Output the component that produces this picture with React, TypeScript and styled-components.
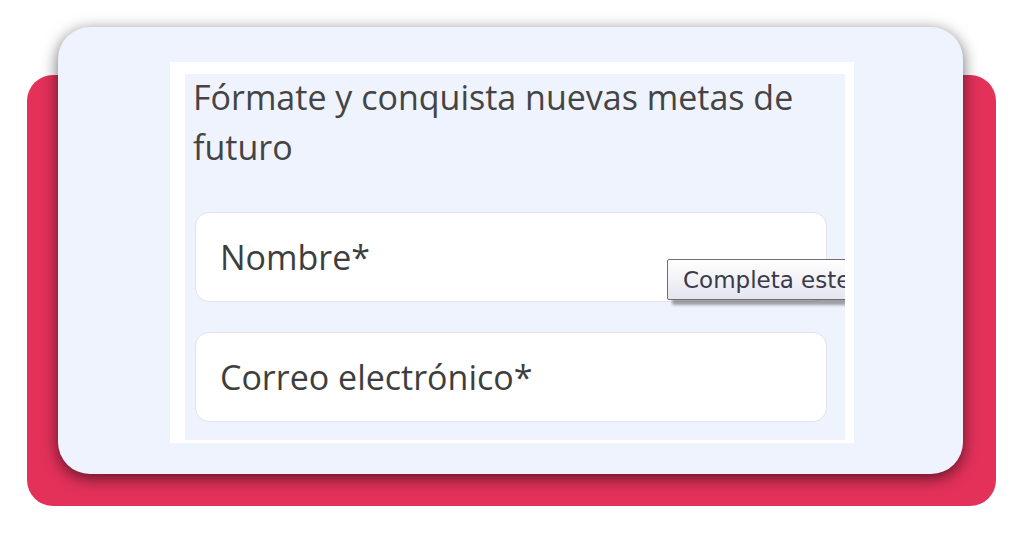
import styled, { createGlobalStyle } from 'styled-components';

const GlobalStyle = createGlobalStyle`
  html, body {
    margin: 0;
    padding: 0;
    background: #ffffff;
  }

  body {
    font-family: 'Open Sans', 'Liberation Sans', sans-serif;
  }
`;

const Stage = styled.div`
  display: grid;
  width: 1024px;
  height: 536px;
`;

// red slab sitting behind the card, same grid cell
const Backdrop = styled.div`
  grid-area: 1 / 1;
  margin: 75px 28px 30px 27px;
  background: #e3315a;
  border-radius: 26px;
`;

const Card = styled.div`
  grid-area: 1 / 1;
  display: flex;
  margin: 27px 61px 62px 58px;
  padding: 35px 109px 31px 112px;
  background: #eff3fd;
  border-radius: 32px;
  box-shadow: 0 4px 16px rgba(0, 0, 0, 0.6);
`;

const Shot = styled.div`
  flex: 1;
  display: flex;
  padding: 12px 9px 3px 15px;
  background: #ffffff;
`;

const Form = styled.div`
  position: relative;
  flex: 1;
  display: flex;
  flex-direction: column;
  gap: 30px;
  padding: 0 18px 0 8px;
  background: #eff3fd;
  overflow: hidden;
`;

const Title = styled.h2`
  margin: -2px 0 10px;
  font-size: 34px;
  font-weight: 400;
  line-height: 50px;
  color: #444444;
`;

const Field = styled.div`
  box-sizing: border-box;
  display: flex;
  align-items: center;
  height: 90px;
  margin-left: 2px;
  padding-left: 24px;
  background: #ffffff;
  border: 1px solid #e1e4ea;
  border-radius: 14px;
  font-size: 34px;
  color: #3e3e3e;
`;

const Tooltip = styled.div`
  position: absolute;
  left: 482px;
  top: 185px;
  box-sizing: border-box;
  height: 41px;
  display: flex;
  align-items: center;
  padding: 0 14px 0 15px;
  white-space: nowrap;
  background: linear-gradient(#ffffff, #e4e5ef);
  border: 1px solid #6e6e6e;
  border-radius: 2px;
  box-shadow: 5px 5px 3px rgba(0, 0, 0, 0.35);
  font-family: 'DejaVu Sans', 'Liberation Sans', sans-serif;
  font-size: 23px;
  color: #3a3a4a;
`;

const fields = ['Nombre*', 'Correo electrónico*'];

export default function App() {
  return (
    <>
      <GlobalStyle />
      <Stage>
        <Backdrop />
        <Card>
          <Shot>
            <Form>
              <Title>Fórmate y conquista nuevas metas de futuro</Title>
              {fields.map((label) => (
                <Field key={label}>{label}</Field>
              ))}
              <Tooltip>Completa este campo.</Tooltip>
            </Form>
          </Shot>
        </Card>
      </Stage>
    </>
  );
}
